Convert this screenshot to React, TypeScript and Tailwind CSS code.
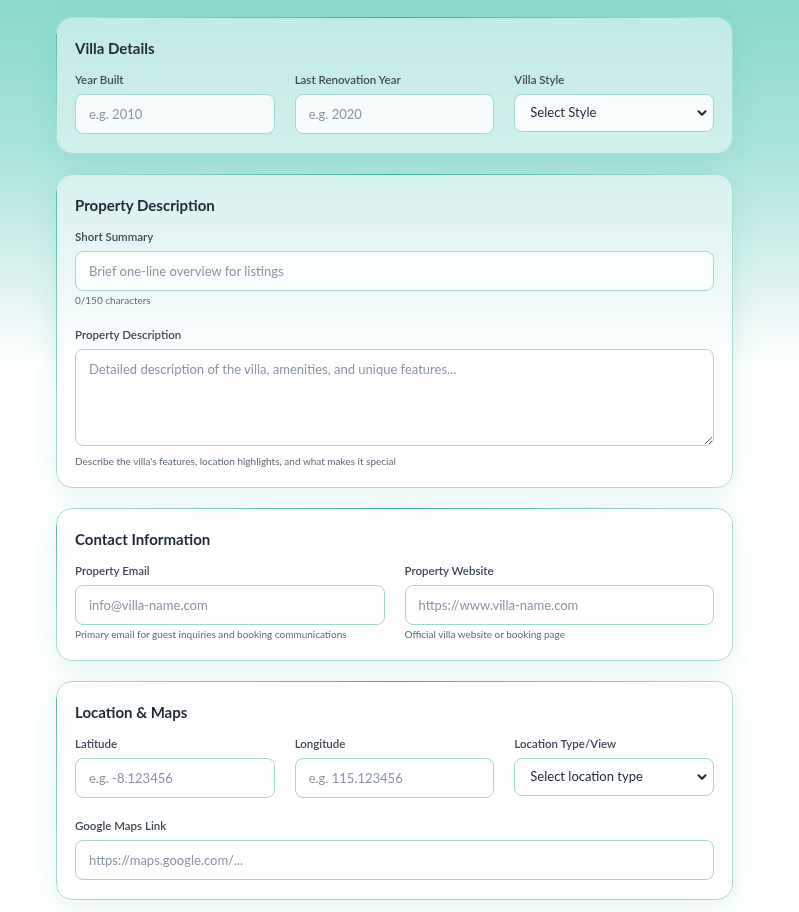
import React from "react";

const font = { fontFamily: 'Lato, "Noto Sans", sans-serif' };

function Card({ title, children }: { title: string; children: React.ReactNode }) {
  return (
    <section className="relative rounded-2xl border border-[#a9ddd6] bg-white/45 backdrop-blur-sm px-[18px] pt-[18px] pb-[19px] shadow-[0_6px_28px_rgba(45,170,155,0.14)] before:absolute before:left-4 before:right-4 before:-top-px before:h-px before:bg-gradient-to-r before:from-transparent before:via-[#3fae9f] before:to-transparent after:absolute after:-left-px after:top-4 after:bottom-4 after:w-px after:bg-gradient-to-b after:from-[#5bbcae] after:to-transparent">
      <h2 className="mb-3 text-[15px] font-bold leading-6 text-[#1f2937]">{title}</h2>
      {children}
    </section>
  );
}

function Label({ children }: { children: React.ReactNode }) {
  return <label className="mb-1.5 block text-[11.5px] font-semibold leading-4 text-[#3f4856]">{children}</label>;
}

function Help({ children, className = "" }: { children: React.ReactNode; className?: string }) {
  return <p className={"text-[10px] leading-[13px] text-[#5f6b7a] " + className}>{children}</p>;
}

const inputCls =
  "block h-10 w-full rounded-lg border border-[#9fd9d1] bg-white/80 px-[13px] text-[13px] text-[#1f2937] placeholder:text-[#8b95a5] outline-none";

function Input({ placeholder }: { placeholder: string }) {
  return <input type="text" placeholder={placeholder} className={inputCls} />;
}

function Select({ label }: { label: string }) {
  return (
    <div className="relative">
      <select className="block h-[38px] w-full appearance-none rounded-lg border border-[#9fd9d1] bg-white/85 pl-[15px] pr-8 text-[13px] text-[#1f2937] outline-none">
        <option>{label}</option>
      </select>
      <svg
        className="pointer-events-none absolute right-[7px] top-1/2 -translate-y-1/2"
        width="10"
        height="10"
        viewBox="0 0 10 10"
        fill="none"
      >
        <path d="M1.5 3.2 L5 6.7 L8.5 3.2" stroke="#1f2937" strokeWidth="2" strokeLinecap="round" strokeLinejoin="round" />
      </svg>
    </div>
  );
}

export default function App() {
  return (
    <div
      style={font}
      className="min-h-screen bg-[linear-gradient(180deg,#8cd9ce_0px,#a9e3db_150px,#dcf3f0_280px,#ffffff_370px,#ffffff_100%)]"
    >
      <div className="ml-[56px] flex w-[677px] flex-col gap-5 pt-[17px] pb-6">
        <Card title="Villa Details">
          <div className="grid grid-cols-3 gap-5">
            <div>
              <Label>Year Built</Label>
              <Input placeholder="e.g. 2010" />
            </div>
            <div>
              <Label>Last Renovation Year</Label>
              <Input placeholder="e.g. 2020" />
            </div>
            <div>
              <Label>Villa Style</Label>
              <Select label="Select Style" />
            </div>
          </div>
        </Card>

        <Card title="Property Description">
          <div>
            <Label>Short Summary</Label>
            <Input placeholder="Brief one-line overview for listings" />
            <Help className="mt-[3px]">0/150 characters</Help>
          </div>
          <div className="mt-5">
            <Label>Property Description</Label>
            <textarea
              rows={4}
              placeholder="Detailed description of the villa, amenities, and unique features..."
              className="block h-[97px] w-full rounded-lg border border-[#9fd9d1] bg-white/80 px-[13px] pt-2.5 text-[13px] text-[#1f2937] placeholder:text-[#8b95a5] outline-none"
            />
            <Help className="mt-[9px]">Describe the villa's features, location highlights, and what makes it special</Help>
          </div>
        </Card>

        <Card title="Contact Information">
          <div className="grid grid-cols-2 gap-5">
            <div>
              <Label>Property Email</Label>
              <Input placeholder="info@villa-name.com" />
              <Help className="mt-[3px]">Primary email for guest inquiries and booking communications</Help>
            </div>
            <div>
              <Label>Property Website</Label>
              <Input placeholder="https://www.villa-name.com" />
              <Help className="mt-[3px]">Official villa website or booking page</Help>
            </div>
          </div>
        </Card>

        <Card title="Location & Maps">
          <div className="grid grid-cols-3 gap-5">
            <div>
              <Label>Latitude</Label>
              <Input placeholder="e.g. -8.123456" />
            </div>
            <div>
              <Label>Longitude</Label>
              <Input placeholder="e.g. 115.123456" />
            </div>
            <div>
              <Label>Location Type/View</Label>
              <Select label="Select location type" />
            </div>
          </div>
          <div className="mt-5">
            <Label>Google Maps Link</Label>
            <Input placeholder="https://maps.google.com/..." />
          </div>
        </Card>
      </div>
    </div>
  );
}
